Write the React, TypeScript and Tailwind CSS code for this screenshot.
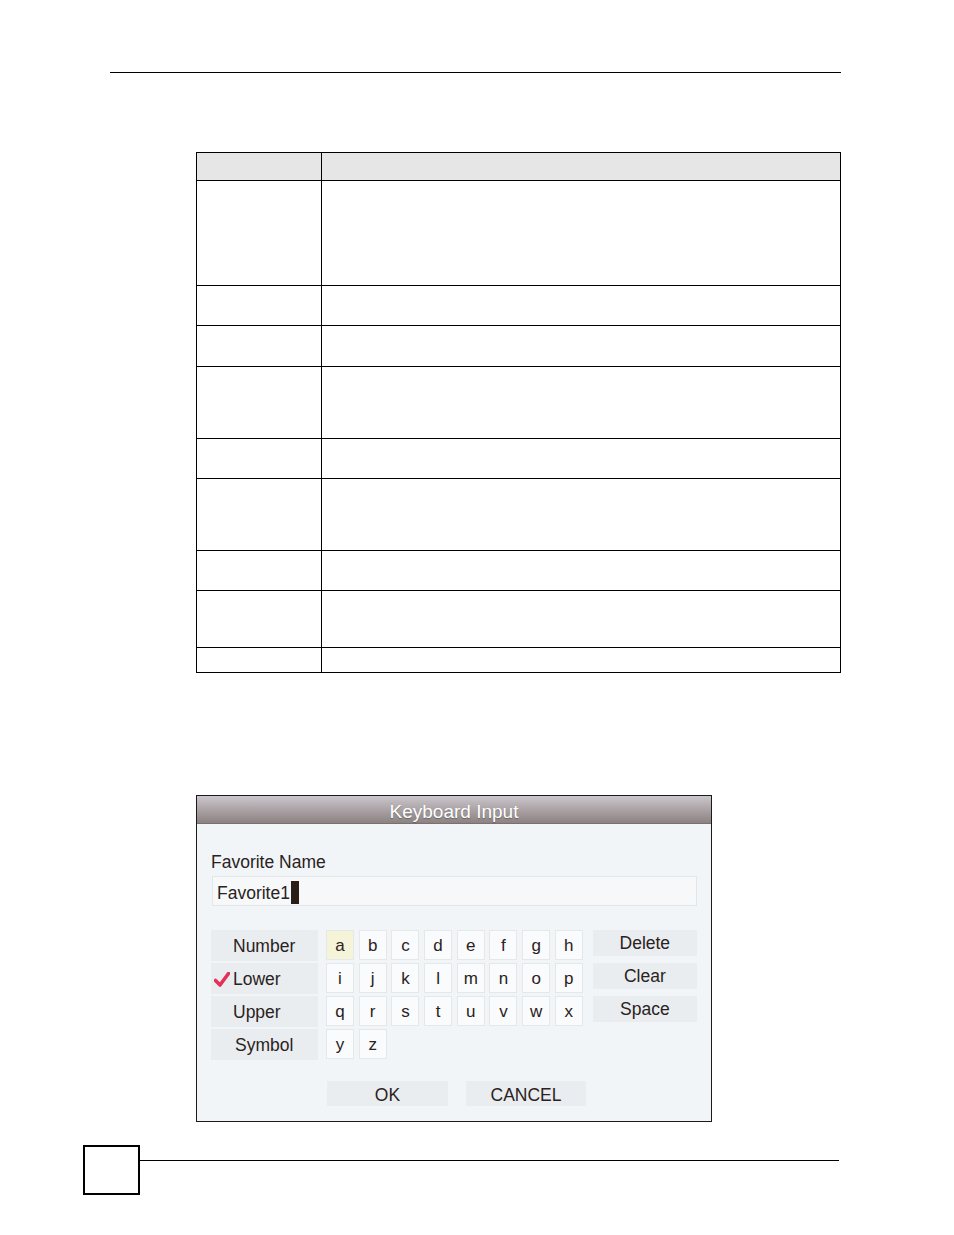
import React from "react";

const rows = [105, 40, 41, 72, 40, 72, 40, 57, 24];
const letters = [
  ["a", "b", "c", "d", "e", "f", "g", "h"],
  ["i", "j", "k", "l", "m", "n", "o", "p"],
  ["q", "r", "s", "t", "u", "v", "w", "x"],
  ["y", "z"],
];

function Check() {
  return (
    <svg width="16" height="15" viewBox="0 0 16 15" className="mr-[3px]">
      <path d="M1.5 8.5 L6 13 L14.5 1.5" fill="none" stroke="#e5305a" strokeWidth="3.6" strokeLinecap="round" strokeLinejoin="round" />
    </svg>
  );
}

export default function App() {
  return (
    <div className="relative w-[954px] h-[1235px] bg-white overflow-hidden font-['Liberation_Sans',Arial,sans-serif]">
      <div className="pt-[72px]">
        <div className="ml-[110px] w-[731px] h-px bg-black" />
      </div>

      {/* Table */}
      <div className="mt-[79px] ml-[196px] w-[645px] border-[1.5px] border-black flex flex-col">
        <div className="flex h-[28px] bg-[#e6e6e6] border-b-[1.5px] border-black">
          <div className="w-[125px] border-r-[1.5px] border-black" />
          <div className="flex-1" />
        </div>
        {rows.map((h, i) => (
          <div
            key={i}
            className={`flex ${i < rows.length - 1 ? "border-b-[1.5px] border-black" : ""}`}
            style={{ height: h }}
          >
            <div className="w-[125px] border-r-[1.5px] border-black" />
            <div className="flex-1" />
          </div>
        ))}
      </div>

      {/* Dialog */}
      <div className="mt-[122px] ml-[196px] w-[516px] h-[327px] border border-[#1a1a1a] bg-[#f2f5f7] flex flex-col text-[#2a2222]">
        <div className="h-[28px] bg-linear-to-b from-[#cbc7cd] via-[#aba3a6] to-[#8c8282] border-b border-[#7a7070] flex items-center justify-center pt-[3px]">
          <span className="text-[19px] leading-none text-white [text-shadow:0_1px_1px_rgba(0,0,0,0.3)]">Keyboard Input</span>
        </div>
        <div className="pl-[14px] pt-[28px]">
          <div className="text-[17.5px] leading-[20px]">Favorite Name</div>
          <div className="mt-[4px] ml-[1px] w-[485px] h-[30px] bg-[#f6f8f9] border border-[#e2e6e8] flex items-center pl-[4px] pt-[3px]">
            <span className="text-[17.5px] leading-[20px]">Favorite1</span>
            <span className="ml-[1px] w-[8px] h-[23px] bg-[#2a1e14]" />
          </div>

          <div className="mt-[24px] flex items-start">
            <div className="w-[107px] flex flex-col gap-[2px]">
              <div className="h-[31px] bg-[#eaedef] flex items-center pl-[22px] pt-[2px] text-[17.5px]">Number</div>
              <div className="h-[31px] bg-[#eaedef] flex items-center pl-[3px] pt-[2px] text-[17.5px]">
                <Check />
                Lower
              </div>
              <div className="h-[31px] bg-[#eaedef] flex items-center pl-[22px] pt-[2px] text-[17.5px]">Upper</div>
              <div className="h-[31px] bg-[#eaedef] flex items-center pl-[24px] pt-[2px] text-[17.5px]">Symbol</div>
            </div>

            <div className="ml-[8px] flex flex-col gap-[3px]">
              {letters.map((row, ri) => (
                <div key={ri} className="flex gap-[4.7px]">
                  {row.map((l) => (
                    <div
                      key={l}
                      className={`w-[28px] h-[30px] border border-[#e4e8ea] flex items-center justify-center pt-[2px] text-[17px] ${
                        l === "a" ? "bg-[#f6f4d8]" : "bg-[#f9fbfc]"
                      }`}
                    >
                      {l}
                    </div>
                  ))}
                </div>
              ))}
            </div>

            <div className="ml-[10px] w-[104px] flex flex-col gap-[7px]">
              {["Delete", "Clear", "Space"].map((t) => (
                <div key={t} className="h-[26px] bg-[#eaedef] flex items-center justify-center pt-[1px] text-[17.5px]">
                  {t}
                </div>
              ))}
            </div>
          </div>

          <div className="mt-[21px] ml-[116px] flex gap-[18px]">
            <div className="w-[121px] h-[25px] bg-[#eaedef] flex items-center justify-center pt-[3px] text-[17.5px]">OK</div>
            <div className="w-[120px] h-[25px] bg-[#eaedef] flex items-center justify-center pt-[3px] text-[17.5px]">CANCEL</div>
          </div>
        </div>
      </div>

      {/* Footer */}
      <div className="mt-[23px] ml-[83px] flex items-start">
        <div className="w-[57px] h-[50px] border-2 border-black" />
        <div className="mt-[15px] w-[699px] h-px bg-black" />
      </div>
    </div>
  );
}
